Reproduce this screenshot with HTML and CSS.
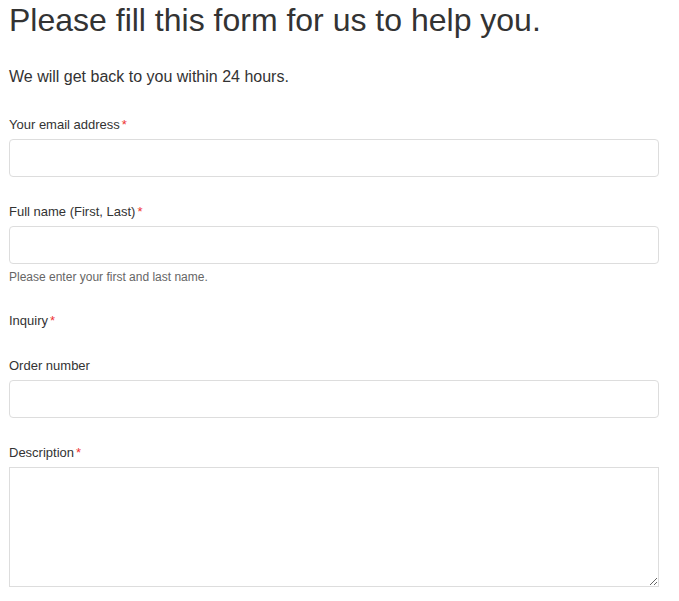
FILE: index.html
```html
<!DOCTYPE html>
<html lang="en">
<head>
  <meta charset="UTF-8">
  <title>Submit a request</title>
  <link rel="stylesheet" href="styles.css">
</head>
<body>
  <div class="container">
    <h1>Please fill this form for us to help you.</h1>
    <p class="intro">We will get back to you within 24 hours.</p>

    <form class="request-form">
      <div class="field">
        <label for="email" class="required">Your email address</label>
        <input type="email" id="email">
      </div>

      <div class="field">
        <label for="fullname" class="required">Full name (First, Last)</label>
        <input type="text" id="fullname">
        <p class="hint">Please enter your first and last name.</p>
      </div>

      <div class="field">
        <label class="required">Inquiry</label>
      </div>

      <div class="field">
        <label for="order">Order number</label>
        <input type="text" id="order">
      </div>

      <div class="field">
        <label for="description" class="required">Description</label>
        <textarea id="description"></textarea>
      </div>
    </form>
  </div>
</body>
</html>
```

FILE: styles.css
```css
body {
  font-family: "Liberation Sans", Arial, sans-serif;
  background: #fff;
  color: #333;
  margin: 0;
}
.container {
  width: 650px;
  padding: 0 9px;
}
h1 {
  font-size: 32px;
  font-weight: normal;
  line-height: 1.1;
  margin: 3px 0 0;
}
.intro {
  font-size: 16px;
  line-height: 22px;
  margin: 28px 0 26px;
}
.field {
  margin-bottom: 24px;
}
label {
  display: block;
  font-size: 13px;
  line-height: 20px;
  padding-top: 1px;
  margin-bottom: 4px;
}
.required::after {
  content: "*";
  color: #e33;
  margin-left: 2px;
}
input, textarea {
  display: block;
  box-sizing: border-box;
  width: 100%;
  margin: 0;
  border: 1px solid #ddd;
  font-family: inherit;
  font-size: 14px;
}
input {
  height: 38px;
  border-radius: 4px;
  padding: 8px 10px;
}
textarea {
  height: 120px;
  border-radius: 0;
  padding: 8px 10px;
}
.hint {
  font-size: 12px;
  line-height: 17px;
  color: #666;
  margin: 5px 0 0;
}
```
